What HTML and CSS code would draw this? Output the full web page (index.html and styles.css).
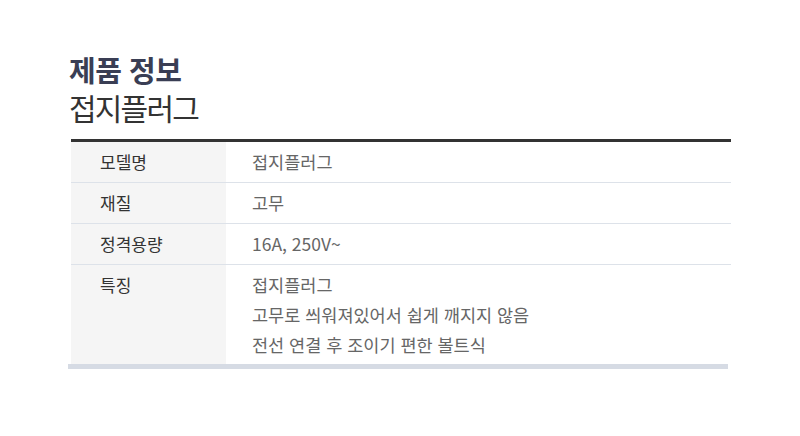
FILE: index.html
```html
<!DOCTYPE html>
<html lang="ko">
<head>
<meta charset="utf-8">
<link rel="stylesheet" href="styles.css">
</head>
<body>
<div class="page">
  <div class="heading">
    <h1 class="title">제품 정보</h1>
    <h2 class="subtitle">접지플러그</h2>
  </div>
  <div class="spec">
    <div class="row">
      <div class="label">모델명</div>
      <div class="value">접지플러그</div>
    </div>
    <div class="row">
      <div class="label">재질</div>
      <div class="value">고무</div>
    </div>
    <div class="row">
      <div class="label">정격용량</div>
      <div class="value">16A, 250V~</div>
    </div>
    <div class="row last">
      <div class="label">특징</div>
      <div class="value">
        <div>접지플러그</div>
        <div>고무로 씌워져있어서 쉽게 깨지지 않음</div>
        <div>전선 연결 후 조이기 편한 볼트식</div>
      </div>
    </div>
  </div>
  <div class="bottom-bar"></div>
</div>
</body>
</html>
```
FILE: styles.css
```css
* { box-sizing: border-box; }
html, body {
  margin: 0;
  padding: 0;
  background: #ffffff;
  font-family: "Noto Sans CJK KR", "Noto Sans", sans-serif;
}
.page {
  width: 800px;
  height: 436px;
  padding: 54px 0 0 0;
}
.heading {
  padding-left: 69px;
  display: flex;
  flex-direction: column;
  gap: 7px;
}
.title {
  margin: 0;
  font-size: 29px;
  line-height: 30px;
  font-weight: 700;
  color: #3a3e54;
  letter-spacing: -0.5px;
}
.subtitle {
  margin: 0;
  font-size: 30px;
  line-height: 32px;
  font-weight: 400;
  color: #333333;
  letter-spacing: -1.8px;
}
.spec {
  margin: 16px 0 0 71px;
  width: 660px;
  border-top: 3px solid #333333;
}
.row {
  display: flex;
  border-bottom: 1px solid #dde2e9;
}
.row.last {
  border-bottom: none;
}
.label {
  width: 155px;
  flex: none;
  background: #f5f5f5;
  padding: 5px 0 5px 29px;
  font-size: 17px;
  line-height: 30px;
  color: #333333;
}
.value {
  flex: 1;
  padding: 5px 0 4px 26px;
  font-size: 17.5px;
  line-height: 30px;
  color: #666666;
}
.bottom-bar {
  margin-left: 68px;
  width: 660px;
  height: 5px;
  background: #d6dbe4;
}
```
